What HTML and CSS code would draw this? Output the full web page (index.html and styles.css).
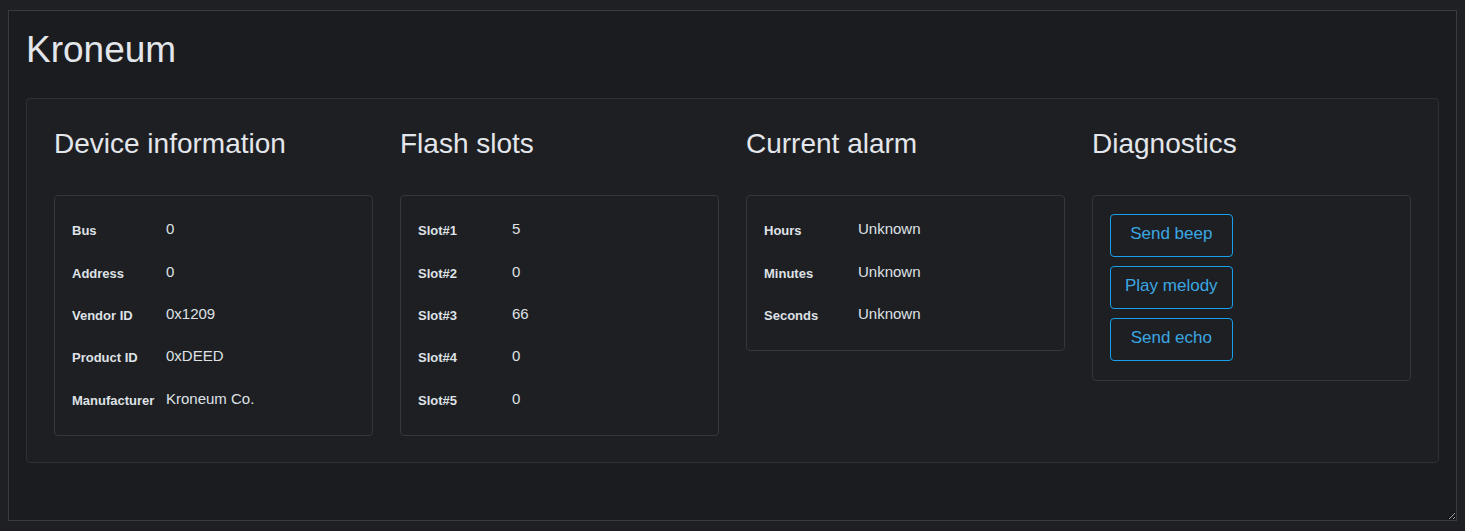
FILE: index.html
```html
<!DOCTYPE html>
<html lang="en">
<head>
<meta charset="utf-8">
<title>Kroneum</title>
<link rel="stylesheet" href="styles.css">
</head>
<body>
<div class="frame">
  <h1 class="title">Kroneum</h1>
  <section class="card">
    <div class="col">
      <h3 class="col-title">Device information</h3>
      <div class="box">
        <div class="row"><span class="label">Bus</span><span class="value">0</span></div>
        <div class="row"><span class="label">Address</span><span class="value">0</span></div>
        <div class="row"><span class="label">Vendor ID</span><span class="value">0x1209</span></div>
        <div class="row"><span class="label">Product ID</span><span class="value">0xDEED</span></div>
        <div class="row"><span class="label">Manufacturer</span><span class="value">Kroneum Co.</span></div>
      </div>
    </div>
    <div class="col">
      <h3 class="col-title">Flash slots</h3>
      <div class="box">
        <div class="row"><span class="label">Slot#1</span><span class="value">5</span></div>
        <div class="row"><span class="label">Slot#2</span><span class="value">0</span></div>
        <div class="row"><span class="label">Slot#3</span><span class="value">66</span></div>
        <div class="row"><span class="label">Slot#4</span><span class="value">0</span></div>
        <div class="row"><span class="label">Slot#5</span><span class="value">0</span></div>
      </div>
    </div>
    <div class="col">
      <h3 class="col-title">Current alarm</h3>
      <div class="box">
        <div class="row"><span class="label">Hours</span><span class="value">Unknown</span></div>
        <div class="row"><span class="label">Minutes</span><span class="value">Unknown</span></div>
        <div class="row"><span class="label">Seconds</span><span class="value">Unknown</span></div>
      </div>
    </div>
    <div class="col">
      <h3 class="col-title">Diagnostics</h3>
      <div class="box box-actions">
        <div class="actions">
          <button class="btn">Send beep</button>
          <button class="btn">Play melody</button>
          <button class="btn">Send echo</button>
        </div>
      </div>
    </div>
  </section>
</div>
</body>
</html>
```

FILE: styles.css
```css
html {
  background: #1f2023;
}
body {
  margin: 10px 8px 0;
  font-family: "Liberation Sans", Arial, sans-serif;
  color: #dee2e6;
}
.frame {
  box-sizing: border-box;
  height: 511px;
  border: 1px solid #3a3b3f;
  background: #1b1c20;
  padding: 0 17px;
  overflow: auto;
  resize: both;
  color-scheme: dark;
}
.title {
  margin: 17px 0 26px;
  font-size: 37px;
  font-weight: 400;
  line-height: 1.2;
  color: #e3e6ea;
}
.card {
  display: grid;
  grid-template-columns: repeat(4, 1fr);
  column-gap: 27px;
  align-items: start;
  padding: 28px 27px 26px;
  border: 1px solid #303135;
  border-radius: 4px;
  background: #1e1f23;
}
.col-title {
  margin: 0 0 34px;
  font-size: 28px;
  font-weight: 400;
  line-height: 1.2;
  color: #e3e6ea;
}
.box {
  border: 1px solid #36373b;
  border-radius: 4px;
  padding: 14px 17px 13px;
  background: #1e1f23;
}
.row {
  display: grid;
  grid-template-columns: 94px 1fr;
  align-items: center;
  height: 42.4px;
}
.label {
  font-size: 13px;
  font-weight: 700;
  line-height: 16px;
  color: #dee2e6;
}
.value {
  font-size: 15px;
  line-height: 18px;
  padding-bottom: 4px;
  color: #dee2e6;
}
.box-actions {
  padding: 18px 17px 19px;
}
.actions {
  display: inline-flex;
  flex-direction: column;
  gap: 9px;
}
.btn {
  box-sizing: border-box;
  height: 43px;
  padding: 0 14px 2px;
  font-family: "Liberation Sans", Arial, sans-serif;
  font-size: 17px;
  line-height: 24px;
  color: #3ba7e2;
  background: transparent;
  border: 1px solid #17a0ee;
  border-radius: 4px;
  cursor: pointer;
}
```
